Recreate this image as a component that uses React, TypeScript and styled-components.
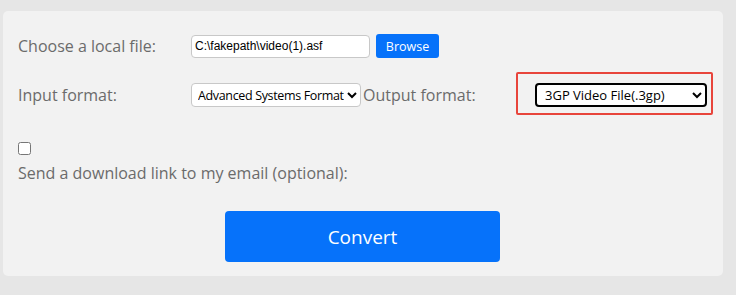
import React, { useState } from 'react'
import styled, { createGlobalStyle } from 'styled-components'

const GlobalStyle = createGlobalStyle`
    html, body {
        margin: 0;
        padding: 0;
        background: #e6e6e6;
        font-family: "Open Sans", "Noto Sans", Arial, sans-serif;
    }
`

const INPUT_FORMATS = ['Advanced Systems Format', 'Audio Video Interleave', 'MPEG-4 Video']
const OUTPUT_FORMATS = ['3GP Video File(.3gp)', 'MP4 Video File(.mp4)', 'AVI Video File(.avi)']

const App: React.FC = () => {
    const [inputFormat, setInputFormat] = useState<string>(INPUT_FORMATS[0])
    const [outputFormat, setOutputFormat] = useState<string>(OUTPUT_FORMATS[0])
    const [sendEmail, setSendEmail] = useState<boolean>(false)

    return (
        <>
            <GlobalStyle />
            <Page>
                <Panel>
                    <Row>
                        <Label>Choose a local file:</Label>
                        <FileInput type="text" readOnly value={'C:\\fakepath\\video(1).asf'} />
                        <BrowseButton type="button">Browse</BrowseButton>
                    </Row>

                    <Row $top={25}>
                        <Label>Input format:</Label>
                        <Select $compact value={inputFormat} onChange={e => setInputFormat(e.target.value)}>
                            {INPUT_FORMATS.map(f => <option key={f} value={f}>{f}</option>)}
                        </Select>
                        <OutputLabel>Output format:</OutputLabel>
                        <Highlight>
                            <Select $focused value={outputFormat} onChange={e => setOutputFormat(e.target.value)}>
                                {OUTPUT_FORMATS.map(f => <option key={f} value={f}>{f}</option>)}
                            </Select>
                        </Highlight>
                    </Row>

                    <Checkbox type="checkbox" checked={sendEmail} onChange={e => setSendEmail(e.target.checked)} />
                    <EmailLabel>Send a download link to my email (optional):</EmailLabel>

                    <ConvertButton type="button">Convert</ConvertButton>
                </Panel>
            </Page>
        </>
    )
}

export default App

const Page = styled.div`
    width: 736px;
    height: 295px;
    padding: 11px 0 0 3px;
    box-sizing: border-box;
`

const Panel = styled.div`
    width: 720px;
    height: 265px;
    box-sizing: border-box;
    padding: 23px 15px 0 15px;
    background: #f2f2f2;
    border-radius: 5px;
    display: flex;
    flex-direction: column;
`

const Row = styled.div<{ $top?: number }>`
    display: flex;
    align-items: center;
    height: 24px;
    margin-top: ${p => p.$top || 0}px;
`

const Label = styled.span`
    width: 173px;
    flex-shrink: 0;
    font-size: 16px;
    color: #6b6b6b;
`

const OutputLabel = styled(Label)`
    width: 153px;
    margin-left: 2px;
`

const FileInput = styled.input`
    width: 179px;
    height: 23px;
    box-sizing: border-box;
    padding: 0 3px;
    border: 1px solid #c8c8c8;
    border-radius: 4px;
    background: #fff;
    font-family: "Liberation Sans", Arial, sans-serif;
    font-size: 12px;
    color: #000;
    outline: none;
`

const BrowseButton = styled.button`
    margin-left: 6px;
    width: 63px;
    height: 24px;
    padding: 0;
    border: none;
    border-radius: 3px;
    background: #0672fa;
    color: #fff;
    font-family: "Open Sans", "Noto Sans", sans-serif;
    font-size: 12.5px;
`

const Select = styled.select<{ $focused?: boolean; $compact?: boolean }>`
    width: ${p => p.$focused ? 172 : 171}px;
    height: 24px;
    box-sizing: border-box;
    padding: 0 0 0 ${p => p.$compact ? 2 : 4}px;
    border: ${p => p.$focused ? '2px solid #000' : '1px solid #c8c8c8'};
    border-radius: 4px;
    background: #fff;
    color: #000;
    font-family: "Open Sans", "Noto Sans", sans-serif;
    font-size: ${p => p.$compact ? 12.5 : 13}px;
    letter-spacing: ${p => p.$compact ? '-0.35px' : '0'};
    outline: none;
`

const Highlight = styled.div`
    margin: -11px 0 -8px 0;
    padding: 9px 4px 6px 17px;
    border: 2px solid #e8453c;
    border-radius: 2px;
`

const Checkbox = styled.input`
    width: 13px;
    height: 13px;
    margin: 35px 0 0 0;
    align-self: flex-start;
`

const EmailLabel = styled.div`
    margin-top: 7px;
    font-size: 16px;
    line-height: 22px;
    color: #6b6b6b;
`

const ConvertButton = styled.button`
    align-self: flex-start;
    margin: 27px 0 0 207px;
    width: 275px;
    height: 51px;
    border: none;
    border-radius: 4px;
    background: #0672fa;
    color: #fff;
    font-family: "Open Sans", "Noto Sans", sans-serif;
    font-size: 19px;
`
